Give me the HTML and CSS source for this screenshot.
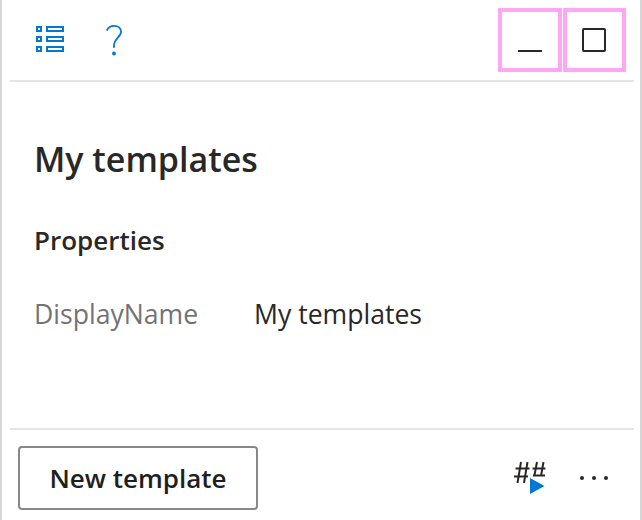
FILE: index.html
```html
<!DOCTYPE html>
<html lang="en">
<head>
<meta charset="utf-8">
<title>My templates</title>
<link rel="stylesheet" href="styles.css">
</head>
<body>
<div class="pane">
  <header class="toolbar">
    <div class="tools">
      <button class="tool list-tool" aria-label="List">
        <svg width="30" height="28" viewBox="0 0 30 28"><g fill="none" stroke="#0078d4" stroke-width="2"><rect x="1" y="1" width="4" height="4"/><rect x="1" y="11" width="4" height="4"/><rect x="1" y="21" width="4" height="4"/><rect x="11" y="1" width="16" height="4"/><rect x="11" y="11" width="16" height="4"/><rect x="11" y="21" width="16" height="4"/></g></svg>
      </button>
      <button class="tool help-tool" aria-label="Help">
        <svg width="20" height="34" viewBox="0 0 20 34"><path d="M2.800 6.500C4.300 3.500 6.800 1.900 10 1.900c4.200 0 7 2.400 7 5.900 0 3-1.700 4.500-3.700 6.500-2 2-3.300 3.500-3.300 6.500v3" fill="none" stroke="#0078d4" stroke-width="1.800"/><circle cx="10" cy="29.500" r="1.900" fill="#0078d4"/></svg>
      </button>
    </div>
    <div class="window-btns">
      <button class="win-btn min-btn" aria-label="Minimize"><span class="min-glyph"></span></button>
      <button class="win-btn max-btn" aria-label="Maximize"><span class="max-glyph"></span></button>
    </div>
  </header>
  <main class="content">
    <h1 class="title">My templates</h1>
    <h2 class="section">Properties</h2>
    <div class="prop">
      <span class="prop-key">DisplayName</span>
      <span class="prop-val">My templates</span>
    </div>
  </main>
  <footer class="footer">
    <button class="primary">New template</button>
    <div class="foot-tools">
      <button class="tool hash-tool" aria-label="Run">
        <svg width="32" height="34" viewBox="0 0 32 34"><g fill="none" stroke="#292827" stroke-width="2"><path d="M7 1 3.500 22M13.500 1 10 22M1.500 7.500h14M0 15.500h14"/><path d="M23 1 20.500 14M29.500 1 27 15M18.500 7.500h13M19 14.500h12"/></g><path d="M16 17 30.500 25 16 33z" fill="#fff" stroke="#fff" stroke-width="2"/><path d="M16 17 30.500 25 16 33z" fill="#0078d4"/></svg>
      </button>
      <button class="tool more-tool" aria-label="More">
        <svg width="30" height="4" viewBox="0 0 30 4"><g fill="#292827"><circle cx="2" cy="2" r="2"/><circle cx="14" cy="2" r="2"/><circle cx="26" cy="2" r="2"/></g></svg>
      </button>
    </div>
  </footer>
</div>
</body>
</html>
```
FILE: styles.css
```css
* { box-sizing: border-box; }
html, body { margin: 0; padding: 0; background: #fff; }
body { font-family: "Open Sans", "Noto Sans", sans-serif; color: #292827; }
button { background: none; border: 0; padding: 0; margin: 0; font: inherit; color: inherit; }
.pane {
  width: 642px; height: 520px;
  border-left: 2px solid #d6d6d6; border-right: 2px solid #d6d6d6;
  display: flex; flex-direction: column;
  padding-left: 8px; padding-right: 6px;
}
.toolbar {
  height: 82px; flex: none;
  display: flex; justify-content: space-between;
  border-bottom: 2px solid #e5e5e5;
}
.tools { display: flex; align-items: flex-start; }
.tool { display: flex; }
.list-tool { margin: 26px 0 0 26px; }
.help-tool { margin: 24px 0 0 38px; }
.window-btns { display: flex; gap: 1px; padding: 8px 8px 0 0; }
.win-btn {
  height: 64px;
  border: 4px solid #ffa6f5;
  display: flex; align-items: center; justify-content: center;
}
.min-btn { width: 64px; }
.max-btn { width: 63px; padding-right: 1px; }
.min-glyph { width: 24px; height: 2px; background: #292827; margin-top: 22px; }
.max-glyph { width: 24px; height: 24px; border: 2px solid #292827; border-radius: 2px; }
.content { flex: 1; padding: 52px 0 0 24px; }
.title { margin: 0; font-size: 34px; line-height: 50px; font-weight: 600; }
.section { margin: 38px 0 0; font-size: 26px; line-height: 36px; font-weight: 600; }
.prop { display: flex; margin-top: 37px; font-size: 26.600px; line-height: 38px; }
.prop-key { width: 220px; color: #737373; }
.footer {
  height: 92px; flex: none;
  border-top: 2px solid #e5e5e5;
  display: flex; justify-content: space-between; align-items: flex-start;
}
.primary {
  margin: 16px 0 0 8px;
  width: 240px; height: 64px;
  border: 2px solid #8a8886; border-radius: 4px;
  font-size: 26px; font-weight: 600; color: #201f1e;
}
.foot-tools { display: flex; align-items: flex-start; padding-right: 24px; }
.hash-tool { margin-top: 31px; }
.more-tool { margin: 46px 0 0 34px; }
```
